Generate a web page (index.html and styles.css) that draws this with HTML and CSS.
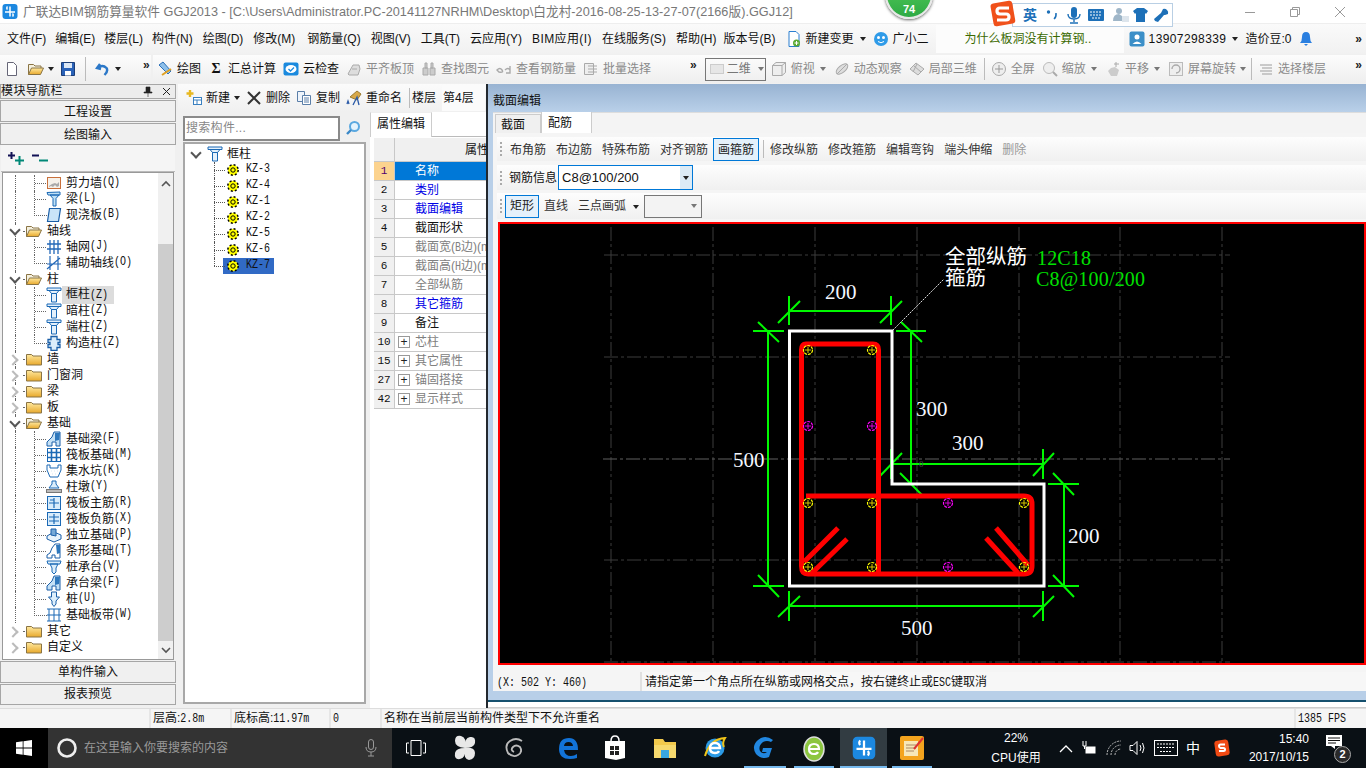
FILE: index.html
```html
<!DOCTYPE html>
<html lang="zh-CN">
<head>
<meta charset="utf-8">
<title>广联达BIM钢筋算量软件 GGJ2013</title>
<link rel="stylesheet" href="styles.css">
</head>
<body>
<svg class="defs" width="0" height="0">
<defs>
<linearGradient id="fy" x1="0" y1="0" x2="0" y2="1"><stop offset="0" stop-color="#ffe9a0"/><stop offset="1" stop-color="#e8a92c"/></linearGradient>
<symbol id="fold" viewBox="0 0 16 16"><path d="M.5 3.5h5l1.5 1.5h8.500v9H.5z" fill="url(#fy)" stroke="#8a7444"/></symbol>
<symbol id="foldo" viewBox="0 0 16 16"><path d="M.5 13.500v-10h5l1.500 1.500h6v2" fill="#f4f0df" stroke="#8a7444"/><path d="M.5 13.500l3-6.500h12l-3 6.500z" fill="url(#fy)" stroke="#8a7444"/></symbol>
<symbol id="col" viewBox="0 0 16 16"><path d="M1 1h14v2.500H1zM3 3.500h10l-2.500 3h-5zM5.500 6.500h5V15h-5z" fill="#e4f1fc" stroke="#1b69b5"/></symbol>
<symbol id="wall" viewBox="0 0 16 16"><rect x="1.500" y="2.500" width="13" height="11" fill="#f5f1ea" stroke="#c8703c"/><path d="M3 12l2-1 2 1 2-2 2 2 2-1V7l-2 2-2-1-3 1-3 2z" fill="#aaa"/></symbol>
<symbol id="beam" viewBox="0 0 16 16"><path d="M1 1.500l13-.5v3H2zM4 4h9l-3 3.500V15H7V7.500z" fill="#bfe0f6" stroke="#1b69b5"/></symbol>
<symbol id="slab" viewBox="0 0 16 16"><path d="M3.500 1.500h11l-2 13h-11z" fill="#c9e4f8" stroke="#1b5fa8" stroke-width="1.200"/></symbol>
<symbol id="grid" viewBox="0 0 16 16"><path d="M4 1v14M8 1v14M12 1v14M1 5h14M1 10h14" stroke="#2468b8" fill="none" stroke-width="1.300"/></symbol>
<symbol id="axis" viewBox="0 0 16 16"><path d="M4 1v14M12 1v14M1 9h14M1 14L14 3" stroke="#2468b8" fill="none" stroke-width="1.200"/></symbol>
<symbol id="gz" viewBox="0 0 16 16"><path d="M5 1.500h6v3h3v3h-2v2h2v3h-3v3H5v-3H2v-3h2v-2H2v-3h3z" fill="#dceefb" stroke="#1b5fa8" stroke-width="1.300"/></symbol>
<symbol id="fb" viewBox="0 0 16 16"><path d="M1 15v-4l5-5 2-5h6v14h-4v-4H6v4z" fill="#c5e1f6" stroke="#1b5fa8"/><path d="M9 2l5 0-1 7-4 1z" fill="#2f78bd"/></symbol>
<symbol id="raft" viewBox="0 0 16 16"><rect x="1.500" y="1.500" width="13" height="13" fill="#fff" stroke="#1b69b5"/><path d="M1.500 5.500h13M1.500 10.500h13M5.500 1.500v13M10.500 1.500v13" stroke="#1b69b5" stroke-width="1.600"/></symbol>
<symbol id="pit" viewBox="0 0 16 16"><path d="M1 2h3v3h8V2h3v5l-3 7H4L1 7z" fill="#fff" stroke="#1b69b5"/><path d="M5 8h.1M8 8h.1M11 8h.1M6.500 11h.1M9.500 11h.1" stroke="#2277c4" stroke-width="2"/></symbol>
<symbol id="pier" viewBox="0 0 16 16"><path d="M6 2h4v3l3 4H3l3-4z" fill="#dceefb" stroke="#1b69b5"/><rect x=".5" y="10.500" width="15" height="3" fill="#bbb" stroke="#777"/></symbol>
<symbol id="rb1" viewBox="0 0 16 16"><rect x="1.500" y="1.500" width="13" height="13" fill="#d8ecfb" stroke="#1b69b5"/><path d="M3 8h10M8 3v10M4 5h4" stroke="#1b69b5" stroke-width="1.200" fill="none"/></symbol>
<symbol id="rb2" viewBox="0 0 16 16"><rect x="1.500" y="1.500" width="13" height="13" fill="#d8ecfb" stroke="#1b69b5"/><path d="M3 6h10M3 10h10M8 3v10" stroke="#1b69b5" stroke-width="1.200" fill="none"/></symbol>
<symbol id="iso" viewBox="0 0 16 16"><path d="M1 9l7-4 7 3v4l-7 3-7-3z" fill="#e9f3fb" stroke="#1b5fa8"/><path d="M5 8V2h5v7z" fill="#77a9d6" stroke="#1b5fa8"/></symbol>
<symbol id="strip" viewBox="0 0 16 16"><path d="M1 15v-3l3-2 2-5 3-4h5v14H9v-3H6v3z" fill="#fff" stroke="#1b5fa8"/><path d="M10 2h4v8l-3 1z" fill="#2f78bd"/></symbol>
<symbol id="pcap" viewBox="0 0 16 16"><path d="M1 2h14l-1 3H2zM4 5h8l-2 4v4l-2 2-2-2V9z" fill="#dceefb" stroke="#1b69b5"/></symbol>
<symbol id="pile" viewBox="0 0 16 16"><path d="M5.500 1h5v5h3L10 10v3l-2 2.500L6 13v-3L2.500 6h3z" fill="#dceefb" stroke="#1b5fa8"/></symbol>
<symbol id="band" viewBox="0 0 16 16"><path d="M1 2h14M1 14h14M3 14V2M8 14V2M13 14V2M1 8h14" stroke="#1b69b5" fill="none"/></symbol>
<symbol id="gear" viewBox="0 0 12 12"><circle cx="6" cy="6" r="5.200" fill="#ff0" stroke="#000" stroke-width="1.500" stroke-dasharray="2 2.080"/><circle cx="6" cy="6" r="2.200" fill="#ff0" stroke="#000"/></symbol>
<symbol id="dis" viewBox="0 0 16 16"><path d="M2 13l5-9h6l1 4-2 6H3z" fill="#ddd" stroke="#aaa"/><path d="M6 8h5" stroke="#aaa"/></symbol>
<symbol id="app" viewBox="0 0 16 16"><rect x=".5" y=".5" width="15" height="15" rx="3" fill="#1c88e0"/><path d="M3 8.500h10M8 3v10M5.500 6a2 2 0 0 1 0-3M10.500 13a2 2 0 0 0 0-3" stroke="#fff" stroke-width="1.500" fill="none"/></symbol>
</defs>
</svg>

<div class="app">
  <header class="titlebar">
    <svg class="ic titleicon"><use href="#app"/></svg>
    <span class="titletext">广联达BIM钢筋算量软件 GGJ2013 - [C:\Users\Administrator.PC-20141127NRHM\Desktop\白龙村-2016-08-25-13-27-07(2166版).GGJ12]</span>
    <div class="winctl">
      <svg width="12" height="12" viewBox="0 0 12 12"><path d="M1 6.500h10" stroke="#999"/></svg>
      <svg width="12" height="12" viewBox="0 0 12 12"><path d="M1.500 3.500h7v7h-7zM3.500 3V1.500h7v7H9" fill="none" stroke="#999"/></svg>
      <svg width="12" height="12" viewBox="0 0 12 12"><path d="M1 1l10 10M11 1L1 11" stroke="#999"/></svg>
    </div>
  </header>

  <nav class="menubar">
    <span class="m m-n">文件(F)</span><span class="m m-n">编辑(E)</span><span class="m m-n">楼层(L)</span><span class="m">构件(N)</span><span class="m">绘图(D)</span><span class="m m-w">修改(M)</span><span class="m">钢筋量(Q)</span><span class="m">视图(V)</span><span class="m">工具(T)</span><span class="m">云应用(Y)</span><span class="m m-bim">BIM应用(I)</span><span class="m">在线服务(S)</span><span class="m m-help">帮助(H)</span><span class="m">版本号(B)</span>
    <span class="m mi"><svg class="ic"><path d="M3 .5h7l3 3v12H3z" fill="#fff" stroke="#2a7fd0"/><circle cx="10.500" cy="12" r="3.500" fill="#5aaa32"/><path d="M10.500 10v4M8.500 12h4" stroke="#fff"/></svg>新建变更<i class="caret"></i></span>
    <span class="m mi"><svg class="ic"><circle cx="8" cy="8" r="7" fill="#2f9be8"/><circle cx="5.500" cy="6.500" r="1.500" fill="#fff"/><circle cx="10.500" cy="6.500" r="1.500" fill="#fff"/><path d="M5 10.500q3 2.500 6 0" stroke="#fff" fill="none"/></svg>广小二</span>
    <span class="hint">为什么板洞没有计算钢..</span>
    <span class="m mi"><svg class="ic"><rect x=".5" y=".5" width="15" height="15" rx="2" fill="#3b8fc8"/><circle cx="8" cy="6" r="2.500" fill="#fff"/><path d="M3.500 13q4.500-5 9 0z" fill="#fff"/></svg><span class="phone">13907298339</span><i class="caret"></i></span>
    <span class="m">造价豆:0</span>
    <svg class="ic bell"><path d="M8 1q4 0 4 5 0 4 2 6H2q2-2 2-6 0-5 4-5zM6 13h4l-2 2z" fill="#2a7fe0"/></svg>
    <span class="more more-end">»</span>
  </nav>

  <div class="toolbar">
    <div class="tg tg1">
      <svg class="ic"><path d="M3.500 1.500h6l3 3v10h-9z" fill="#fff" stroke="#667"/></svg>
      <svg class="ic ic-open"><use href="#foldo"/></svg><i class="caret c1"></i>
      <svg class="ic"><path d="M1.500 1.500h13v13h-13z" fill="#2a62b8" stroke="#1c3e78"/><path d="M4 2h8v5H4z" fill="#dbe7f5"/><path d="M5 10h6v4.500H5z" fill="#fff"/></svg>
      <b class="sep"></b>
      <svg class="ic ic-undo"><path d="M5 3L2 7l4 1M2.500 7q5-4 9 0 2 3-2 7" fill="none" stroke="#2c78c8" stroke-width="2.400"/></svg><i class="caret c2"></i>
      <span class="more">»</span>
    </div>
    <div class="tg tg2">
      <span class="ti"><svg class="ic"><path d="M2 4l4-3 8 9-3 3z" fill="#8ec0ea" stroke="#2a6fb8"/><path d="M5 14l9-6" stroke="#e0a020" stroke-width="2"/></svg>绘图</span>
      <span class="ti"><span class="sigma">Σ</span>汇总计算</span>
      <span class="ti"><svg class="ic"><rect x=".5" y="1.500" width="15" height="13" rx="2" fill="#1b8ade"/><ellipse cx="8" cy="8" rx="5.500" ry="4" fill="#fff"/><path d="M5.500 8l2 2 3.500-3.500" stroke="#1b8ade" fill="none" stroke-width="1.300"/></svg>云检查</span>
      <span class="ti off"><svg class="ic"><use href="#dis"/></svg>平齐板顶</span>
      <span class="ti off"><svg class="ic"><path d="M2 7h5v7H2zM9 7h5v7H9zM4 2h2v5H4zM10 2h2v5h-2z" fill="#ccc" stroke="#aaa"/></svg>查找图元</span>
      <span class="ti off"><svg class="ic"><path d="M1 9q3-3 5 0t-3 2zM9 9q3-3 5 0M14 5v7H10" fill="none" stroke="#aaa" stroke-width="1.400"/></svg>查看钢筋量</span>
      <span class="ti off"><svg class="ic"><path d="M1.500 2.500h9v11h-9zM5 5h9M5 8h9M5 11h9" fill="#eee" stroke="#aaa"/></svg>批量选择</span>
      <span class="more">»</span>
      <span class="combo2"><i class="swatch"></i>二维<i class="caret g"></i></span>
      <span class="ti off wc"><svg class="ic"><path d="M1.500 4.500L5 1.500h9.500v10l-3.500 3H1.500zM1.500 4.500h9.500v10M11 4.500l3.500-3" fill="#eee" stroke="#aaa"/></svg>俯视<i class="caret g"></i></span>
      <span class="ti off"><svg class="ic"><ellipse cx="8" cy="8" rx="7" ry="3.500" transform="rotate(-40 8 8)" fill="#ddd" stroke="#aaa"/><path d="M3 13L13 3" stroke="#aaa"/></svg>动态观察</span>
      <span class="ti off"><svg class="ic"><path d="M1 8l6-6 8 6-6 6z" fill="#ddd" stroke="#aaa"/><path d="M5 5l7 6M8 3l-4 8" stroke="#aaa"/></svg>局部三维</span>
      <b class="sep s2"></b>
      <span class="ti off"><svg class="ic"><circle cx="8" cy="8" r="6.500" fill="#eee" stroke="#aaa"/><path d="M8 4v8M4 8h8" stroke="#999"/></svg>全屏</span>
      <span class="ti off wc"><svg class="ic"><circle cx="7" cy="7" r="5.500" fill="#eee" stroke="#bbb"/><path d="M11 11l4 4" stroke="#aaa" stroke-width="2"/></svg>缩放<i class="caret g"></i></span>
      <span class="ti off wc"><svg class="ic"><path d="M3 10l3-3 4-1 4 3-2 6H6z" fill="#ccc"/><path d="M11 1v5M9 3h5" stroke="#aaa"/></svg>平移<i class="caret g"></i></span>
      <span class="ti off wd"><svg class="ic"><rect x="1.500" y="1.500" width="13" height="13" fill="#eee" stroke="#bbb"/><path d="M4 8a4 4 0 1 1 4 4" fill="none" stroke="#aaa" stroke-width="1.400"/></svg>屏幕旋转<i class="caret g"></i></span>
      <b class="sep s2"></b>
      <span class="ti off"><svg class="ic"><path d="M2 4h12M4 7h10M2 10h12M4 13h10" stroke="#bbb" stroke-width="1.600"/></svg>选择楼层</span>
      <span class="more more-end">»</span>
    </div>
  </div>

  <main class="main">
    <aside class="nav">
      <div class="navhead"><span>模块导航栏</span><span class="navctl"><svg width="10" height="11" viewBox="0 0 10 11"><path d="M3 1h4v5h2v1H1V6h2zM5 7v4" fill="#222" stroke="#222" stroke-width=".6"/></svg><svg width="9" height="9" viewBox="0 0 9 9"><path d="M1 1l7 7M8 1L1 8" stroke="#222"/></svg></span></div>
      <div class="nbtn">工程设置</div>
      <div class="nbtn">绘图输入</div>
      <div class="pm"><svg width="17" height="14" viewBox="0 0 17 14"><path d="M0 4.500h7M3.500 1v7" stroke="#115" stroke-width="2"/><path d="M7 9.500h9M11.500 5v9" stroke="#087" stroke-width="2"/></svg><svg width="17" height="14" viewBox="0 0 17 14"><path d="M0 4.500h7" stroke="#115" stroke-width="2"/><path d="M7 9.500h9" stroke="#087" stroke-width="2"/></svg></div>
      <div class="navtree">
        <div class="treelist">
          <div class="r r2"><svg class="ti16"><use href="#wall"/></svg>剪力墙<span class="l">(Q)</span></div>
          <div class="r r2"><svg class="ti16"><use href="#beam"/></svg>梁<span class="l">(L)</span></div>
          <div class="r r2 last"><svg class="ti16"><use href="#slab"/></svg>现浇板<span class="l">(B)</span></div>
          <div class="r r1 open"><i class="chev"></i><svg class="ti16"><use href="#foldo"/></svg>轴线</div>
          <div class="r r2"><svg class="ti16"><use href="#grid"/></svg>轴网<span class="l">(J)</span></div>
          <div class="r r2 last"><svg class="ti16"><use href="#axis"/></svg>辅助轴线<span class="l">(O)</span></div>
          <div class="r r1 open"><i class="chev"></i><svg class="ti16"><use href="#foldo"/></svg>柱</div>
          <div class="r r2 sel"><svg class="ti16"><use href="#col"/></svg><span class="selt">框柱<span class="l">(Z)</span></span></div>
          <div class="r r2"><svg class="ti16"><use href="#col"/></svg>暗柱<span class="l">(Z)</span></div>
          <div class="r r2"><svg class="ti16"><use href="#col"/></svg>端柱<span class="l">(Z)</span></div>
          <div class="r r2 last"><svg class="ti16"><use href="#gz"/></svg>构造柱<span class="l">(Z)</span></div>
          <div class="r r1"><i class="chev cl"></i><svg class="ti16"><use href="#fold"/></svg>墙</div>
          <div class="r r1"><i class="chev cl"></i><svg class="ti16"><use href="#fold"/></svg>门窗洞</div>
          <div class="r r1"><i class="chev cl"></i><svg class="ti16"><use href="#fold"/></svg>梁</div>
          <div class="r r1"><i class="chev cl"></i><svg class="ti16"><use href="#fold"/></svg>板</div>
          <div class="r r1 open"><i class="chev"></i><svg class="ti16"><use href="#foldo"/></svg>基础</div>
          <div class="r r2"><svg class="ti16"><use href="#fb"/></svg>基础梁<span class="l">(F)</span></div>
          <div class="r r2"><svg class="ti16"><use href="#raft"/></svg>筏板基础<span class="l">(M)</span></div>
          <div class="r r2"><svg class="ti16"><use href="#pit"/></svg>集水坑<span class="l">(K)</span></div>
          <div class="r r2"><svg class="ti16"><use href="#pier"/></svg>柱墩<span class="l">(Y)</span></div>
          <div class="r r2"><svg class="ti16"><use href="#rb1"/></svg>筏板主筋<span class="l">(R)</span></div>
          <div class="r r2"><svg class="ti16"><use href="#rb2"/></svg>筏板负筋<span class="l">(X)</span></div>
          <div class="r r2"><svg class="ti16"><use href="#iso"/></svg>独立基础<span class="l">(P)</span></div>
          <div class="r r2"><svg class="ti16"><use href="#strip"/></svg>条形基础<span class="l">(T)</span></div>
          <div class="r r2"><svg class="ti16"><use href="#pcap"/></svg>桩承台<span class="l">(V)</span></div>
          <div class="r r2"><svg class="ti16"><use href="#fb"/></svg>承台梁<span class="l">(F)</span></div>
          <div class="r r2"><svg class="ti16"><use href="#pile"/></svg>桩<span class="l">(U)</span></div>
          <div class="r r2 last"><svg class="ti16"><use href="#band"/></svg>基础板带<span class="l">(W)</span></div>
          <div class="r r1 noln"><i class="chev cl"></i><svg class="ti16"><use href="#fold"/></svg>其它</div>
          <div class="r r1 noln"><i class="chev cl"></i><svg class="ti16"><use href="#fold"/></svg>自定义</div>
        </div>
        <div class="vscroll">
          <div class="sbtn"><svg width="10" height="7" viewBox="0 0 10 7"><path d="M1 6l4-4 4 4" fill="none" stroke="#555" stroke-width="1.600"/></svg></div>
          <div class="thumb"></div>
          <div class="sbtn sb2"><svg width="10" height="7" viewBox="0 0 10 7"><path d="M1 1l4 4 4-4" fill="none" stroke="#555" stroke-width="1.600"/></svg></div>
        </div>
      </div>
      <div class="nbtn nb3">单构件输入</div>
      <div class="nbtn nb4">报表预览</div>
    </aside>

    <section class="mid">
      <div class="midbar">
        <span class="bi"><svg class="ic"><path d="M4 0v7M.5 3.500h7" stroke="#e8b820" stroke-width="2.400"/><rect x="7.500" y="7.500" width="8" height="7" fill="#fff" stroke="#3a80c0"/><path d="M7.500 10h8M11 10v4" stroke="#3a80c0"/></svg>新建<i class="caret"></i></span>
        <span class="bi"><svg class="ic"><path d="M2 2l12 12M14 2L2 14" stroke="#333" stroke-width="2"/></svg>删除</span>
        <span class="bi"><svg class="ic"><path d="M1.500 1.500h7v10h-7z" fill="#eef4fb" stroke="#5a7ea8"/><path d="M6.500 5.500h8v9h-8zM8 8h5M8 10h5M8 12h5" fill="#fff" stroke="#5a7ea8"/></svg>复制</span>
        <span class="bi"><svg class="ic"><path d="M4 7l7-6 4 3-4 6z" fill="#d8a848" stroke="#9a7a30"/><path d="M1 14l1-3 1 3M7 15l4-8 2 8" fill="none" stroke="#2a5aa8" stroke-width="1.300"/></svg>重命名</span>
        <b class="sep s3"></b>
        <span class="fl1">楼层</span>
        <span class="fl2">第4层</span>
      </div>
      <div class="midbody">
        <div class="compcol">
          <div class="searchrow">
            <div class="search">搜索构件...</div>
            <div class="sicon"><svg width="16" height="16" viewBox="0 0 16 16"><circle cx="9.500" cy="6.500" r="4.500" fill="#e4f3fd" stroke="#5aa8e0" stroke-width="2"/><path d="M6 10l-4 4" stroke="#3a88c8" stroke-width="2.400"/></svg></div>
          </div>
          <div class="comptree">
            <div class="root"><i class="chev"></i><svg class="ti16"><use href="#col"/></svg>框柱</div>
            <div class="kz"><svg class="ge"><use href="#gear"/></svg><span class="l">KZ-3</span></div>
            <div class="kz"><svg class="ge"><use href="#gear"/></svg><span class="l">KZ-4</span></div>
            <div class="kz"><svg class="ge"><use href="#gear"/></svg><span class="l">KZ-1</span></div>
            <div class="kz"><svg class="ge"><use href="#gear"/></svg><span class="l">KZ-2</span></div>
            <div class="kz"><svg class="ge"><use href="#gear"/></svg><span class="l">KZ-5</span></div>
            <div class="kz"><svg class="ge"><use href="#gear"/></svg><span class="l">KZ-6</span></div>
            <div class="kz last"><div class="kzsel"><svg class="ge"><use href="#gear"/></svg><span class="l">KZ-7</span></div></div>
          </div>
        </div>
        <div class="propcol">
          <div class="ptabs"><span class="ptab">属性编辑</span></div>
          <div class="ptable">
            <div class="prow phead"><span class="pn"></span><span class="pv pvh">属性名称</span></div>
            <div class="prow psel"><span class="pn">1</span><span class="pv">名称</span></div>
            <div class="prow"><span class="pn">2</span><span class="pv blue">类别</span></div>
            <div class="prow"><span class="pn">3</span><span class="pv blue">截面编辑</span></div>
            <div class="prow"><span class="pn">4</span><span class="pv">截面形状</span></div>
            <div class="prow"><span class="pn">5</span><span class="pv gr">截面宽(<span class="l">B</span>边)(mm)</span></div>
            <div class="prow"><span class="pn">6</span><span class="pv gr">截面高(<span class="l">H</span>边)(mm)</span></div>
            <div class="prow"><span class="pn">7</span><span class="pv gr">全部纵筋</span></div>
            <div class="prow"><span class="pn">8</span><span class="pv blue">其它箍筋</span></div>
            <div class="prow"><span class="pn">9</span><span class="pv">备注</span></div>
            <div class="prow"><span class="pn">10</span><span class="pv gr px"><i class="plus">+</i>芯柱</span></div>
            <div class="prow"><span class="pn">15</span><span class="pv gr px"><i class="plus">+</i>其它属性</span></div>
            <div class="prow"><span class="pn">27</span><span class="pv gr px"><i class="plus">+</i>锚固搭接</span></div>
            <div class="prow"><span class="pn">42</span><span class="pv gr px"><i class="plus">+</i>显示样式</span></div>
          </div>
        </div>
      </div>
    </section>

    <section class="dialog">
      <div class="dtitle">截面编辑</div>
      <div class="dbody">
        <div class="dtabs"><span class="dtab">截面</span><span class="dtab act">配筋</span></div>
        <div class="dpanel">
          <div class="drow r-a"><i class="grip"></i><span class="b">布角筋</span><span class="b">布边筋</span><span class="b">特殊布筋</span><span class="b">对齐钢筋</span><span class="b on">画箍筋</span><b class="sep s4"></b><span class="b">修改纵筋</span><span class="b">修改箍筋</span><span class="b">编辑弯钩</span><span class="b">端头伸缩</span><span class="b off">删除</span></div>
          <div class="drow r-b"><i class="grip"></i><span class="lab">钢筋信息</span><span class="rebar">C8@100/200<i class="rarrow"><i class="caret"></i></i></span></div>
          <div class="drow r-c"><i class="grip"></i><span class="b on">矩形</span><span class="b">直线</span><span class="b">三点画弧<i class="caret"></i></span><span class="smallcombo"><i class="caret g"></i></span></div>
          <div class="canvas">
            <svg class="cad" width="864" height="439" viewBox="500 224 864 439">
              <g class="gridl">
                <path d="M611 227V663M713 227V663M815 227V663M917 227V663M1019 227V663M1120 227V663M1222 227V663"/>
                <path d="M604 255H1230M604 357H1230M604 560H1230M604 662H1230"/>
                <path class="gridm" d="M603 459H1230"/>
              </g>
              <g class="dimg">
                <path d="M789 311H891M789 296V325M891 296V325M778 323L800 301M880 323L902 301"/>
                <path d="M768 331V586M753 331H784M753 586H784M758 322L779 342M758 575L779 597"/>
                <path d="M789 606H1043M789 591V621M1043 591V621M778 617L800 596M1033 617L1054 596"/>
                <path d="M1064 484V586M1048 484H1079M1048 586H1079M1053 473L1074 495M1053 575L1074 597"/>
                <path d="M911 331V484M896 331H926M896 484H926M901 322L922 342M900 473L922 495"/>
                <path d="M891 464H1043M891 449V479M1043 449V479M880 476L902 453M1033 476L1054 453"/>
              </g>
              <path class="outline" d="M789.500 331H892V484H1044V586H789.500Z"/>
              <path class="leader" d="M893 330L944 279"/>
              <g class="rebar-r">
                <path d="M806 496H1024Q1032 496 1032 504V566Q1032 574 1024 574H808Q801.500 574 801.500 566V350Q801.500 344 806 344H873Q878.500 344 878.500 350V572"/>
                <path d="M804 562L838 528M812 573L847 539M1028 565L996 528M1018 573L986 538"/>
              </g>
              <g class="yc">
                <circle cx="808" cy="350" r="4.500"/><circle cx="872" cy="350" r="4.500"/><circle cx="808" cy="503" r="4.500"/><circle cx="872" cy="503" r="4.500"/><circle cx="1024" cy="503" r="4.500"/><circle cx="808" cy="567" r="4.500"/><circle cx="872" cy="567" r="4.500"/><circle cx="1024" cy="567" r="4.500"/>
              </g>
              <g class="mc">
                <circle cx="808" cy="426" r="4.500"/><circle cx="872" cy="426" r="4.500"/><circle cx="948" cy="503" r="4.500"/><circle cx="948" cy="567" r="4.500"/>
              </g>
              <g class="inner">
                <path d="M805 350h6M808 347v6M869 350h6M872 347v6M805 503h6M808 500v6M869 503h6M872 500v6M1021 503h6M1024 500v6M805 567h6M808 564v6M869 567h6M872 564v6M1021 567h6M1024 564v6"/>
              </g>
              <g class="innerm">
                <path d="M805 426h6M808 423v6M869 426h6M872 423v6M945 503h6M948 500v6M945 567h6M948 564v6"/>
              </g>
              <text class="dim" x="825" y="299">200</text>
              <text class="dim" x="916" y="416">300</text>
              <text class="dim" x="952" y="450">300</text>
              <text class="dim" x="733" y="467">500</text>
              <text class="dim" x="901" y="635">500</text>
              <text class="dim" x="1068" y="543">200</text>
              <text class="cjk" x="945" y="264">全部纵筋</text>
              <text class="cjk" x="945" y="285">箍筋</text>
              <text class="grn" x="1037" y="265" textLength="54" lengthAdjust="spacing">12C18</text>
              <text class="grn" x="1036" y="286" textLength="109" lengthAdjust="spacing">C8@100/200</text>
              <text class="tiny" x="919" y="467">0</text>
            </svg>
          </div>
          <div class="dstatus"><span class="coord"><span class="l">(X: 502 Y: 460)</span></span><span class="msg">请指定第一个角点所在纵筋或网格交点，按右键终止或<span class="l">ESC</span>键取消</span></div>
        </div>
      </div>
      <div class="dfoot"></div>
    </section>
  </main>

  <footer class="statusbar">
    <span class="sc s-a"></span>
    <span class="sc s-b">层高:<span class="l">2.8m</span></span>
    <span class="sc s-c">底标高:<span class="l">11.97m</span></span>
    <span class="sc s-d"><span class="l">0</span></span>
    <span class="sc s-e">名称在当前层当前构件类型下不允许重名</span>
    <span class="sc s-f"><span class="l">1385 FPS</span></span>
  </footer>

  <div class="taskbar">
    <div class="start"><svg width="16" height="16" viewBox="0 0 16 16"><path d="M0 2.300l6.700-1v6.300H0zM7.500 1.200L16 0v7.600H7.500zM0 8.400h6.700v6.300L0 13.700zM7.500 8.400H16V16l-8.500-1.200z" fill="#fff"/></svg></div>
    <div class="tsearch"><svg width="22" height="22" viewBox="0 0 22 22"><circle cx="11" cy="11" r="8.500" fill="none" stroke="#eee" stroke-width="2.600"/></svg><span>在这里输入你要搜索的内容</span><svg class="micro" width="12" height="18" viewBox="0 0 12 18"><rect x="3.500" y=".5" width="5" height="10" rx="2.500" fill="none" stroke="#999"/><path d="M1 8q0 5 5 5t5-5M6 13v4M3 17h6" fill="none" stroke="#999"/></svg></div>
    <div class="tasks">
      <span class="t t-a"><svg width="20" height="16" viewBox="0 0 20 16"><path d="M5 .5h10v15H5zM3 3H.5v10H3M17 3h2.500v10H17" fill="none" stroke="#fff"/></svg></span>
      <span class="t"><svg width="24" height="26" viewBox="0 0 24 26"><path d="M12 13Q2 12 2 6T8 1q6 1 4 12zM12 13q10-1 10 5t-6 7q-6-1-4-12zM12 13q-1-10 5-11t5 6q-1 5-10 5zM12 13q1 10-5 11t-5-6q1-5 10-5z" fill="#e8e8e8"/></svg></span>
      <span class="t"><svg width="22" height="22" viewBox="0 0 22 22"><path d="M18 4Q12 0 6 4T4 16q5 5 10 2t2-8q-4-3-7 0t1 5" fill="none" stroke="#bbb" stroke-width="1.800"/></svg></span>
      <span class="t t-e"><svg width="24" height="24" viewBox="0 0 24 24"><path d="M3 13Q3 2 13 2q9 0 9 12H8q1 6 7 6 3 0 6-2v4q-3 1-7 1Q3 23 3 13zM8 10h9q-.5-4-4.500-4T8 10z" fill="#1273d8"/></svg></span>
      <span class="t"><svg width="22" height="26" viewBox="0 0 22 26"><path d="M7 6q0-5 4-5t4 5" fill="none" stroke="#fff" stroke-width="1.500"/><path d="M1 6h20v17l-9 2-11-2z" fill="#fff"/><path d="M6 11h4v4H6zM11 11h4v4h-4zM6 16h4v4H6zM11 16h4v4h-4z" fill="#222"/></svg></span>
      <span class="t"><svg width="24" height="22" viewBox="0 0 24 22"><path d="M1 2h9l2 3h11v16H1z" fill="#f2c94c"/><path d="M1 8h22v13H1z" fill="#f6d96e"/><path d="M8 13h8v8H8z" fill="#39a7e0"/></svg></span>
      <span class="t"><svg width="26" height="26" viewBox="0 0 26 26"><circle cx="13" cy="13" r="9.500" fill="#2b9ae6"/><path d="M3 21Q8 4 23 3 20 8 22 12" fill="none" stroke="#f0c419" stroke-width="2"/><path d="M8 13h10q0-5-5-5t-5 5q0 5 5 5 3 0 4-2" fill="none" stroke="#fff" stroke-width="2.400"/></svg></span>
      <span class="t u"><svg width="28" height="26" viewBox="0 0 28 26"><path d="M22 5Q14-1 7 5T5 19q6 6 13 3l3-9h-9l-1 4h5q-4 3-7-1-2-5 3-9 4-2 8 0z" fill="#2187e0"/></svg></span>
      <span class="t u t-g"><svg width="24" height="28" viewBox="0 0 24 28"><ellipse cx="12" cy="15" rx="10" ry="12" fill="#8cc63f" stroke="#ddd" stroke-width="1.500"/><path d="M7 15h10q0-5-5-5t-5 5q0 5 5 5 3 0 4-2" fill="none" stroke="#fff" stroke-width="2.200"/></svg></span>
      <span class="t u act"><svg width="24" height="24" viewBox="0 0 16 16"><use href="#app"/></svg></span>
      <span class="t u t-n"><svg width="26" height="26" viewBox="0 0 26 26"><rect x="1" y="1" width="24" height="24" rx="2" fill="#f4a41e"/><rect x="5" y="6" width="14" height="15" fill="#f7e7b8"/><path d="M7 10h10M7 13h10M7 16h8" stroke="#a86"/><path d="M15 14L24 3" stroke="#d33" stroke-width="2"/></svg></span>
    </div>
    <div class="tray">
      <div class="cpu"><span>22%</span><span>CPU使用</span></div>
      <svg class="tr tr1" width="14" height="9" viewBox="0 0 14 9"><path d="M1 8l6-6 6 6" fill="none" stroke="#fff" stroke-width="1.300"/></svg>
      <svg class="tr tr2" width="16" height="16" viewBox="0 0 16 16"><rect x="4.500" y="6.500" width="10" height="7" fill="#fff"/><path d="M2 1v5h3V1M3.500 6v3" stroke="#fff" fill="none"/></svg>
      <svg class="tr tr3" width="18" height="16" viewBox="0 0 18 16"><path d="M1 15A14 14 0 0 1 15 1M5 15A10 10 0 0 1 15 5M9 15a6 6 0 0 1 6-6" fill="none" stroke="#bbb" stroke-dasharray="2 1"/></svg>
      <svg class="tr tr4" width="18" height="16" viewBox="0 0 18 16"><path d="M1 5.500h3l4-4v13l-4-4H1zM11 5q2 3 0 6M13.500 3q3 5 0 10" fill="none" stroke="#fff"/></svg>
      <svg class="tr tr5" width="24" height="16" viewBox="0 0 24 16"><rect x=".5" y=".5" width="23" height="15" fill="none" stroke="#fff"/><path d="M3 4h18M3 7.500h18M6 11.500h12" stroke="#fff" stroke-dasharray="2 1"/></svg>
      <span class="zh">中</span>
      <svg class="tr tr6" width="16" height="18" viewBox="0 0 16 18"><rect x="1" y="1" width="14" height="16" rx="3" fill="#f04a14" transform="rotate(-8 8 9)"/><path d="M11 5.500H6.500q-1.500 0-1.500 1.500T6.500 9h3q1.500 0 1.500 1.500T9.500 12H5" fill="none" stroke="#fff" stroke-width="2"/></svg>
      <div class="clock"><span>15:40</span><span>2017/10/15</span></div>
      <span class="notif"><svg width="16" height="14" viewBox="0 0 16 14"><path d="M0 0h16v11H9v3l-4-3H0z" fill="#fff"/><path d="M2 3h12M2 5.500h12M2 8h8" stroke="#111"/></svg><b class="nbadge">2</b></span>
    </div>
  </div>

  <div class="badge74"><span>74</span></div>
  <div class="ime">
    <svg class="imes" width="27" height="28" viewBox="0 0 27 28"><rect x="2" y="2" width="22" height="23" rx="3" fill="#f0501a" transform="rotate(-10 13 14)"/><path d="M19 8H10q-3 0-3 3t3 3h6q3 0 3 3t-3 3H7" fill="none" stroke="#fff" stroke-width="3.200"/></svg>
    <span class="imet">英</span>
    <svg width="12" height="12" viewBox="0 0 12 12"><circle cx="2.500" cy="3" r="1.700" fill="#1d70b8"/><path d="M10 4q.5 4-2 6" stroke="#1d70b8" stroke-width="1.500" fill="none"/></svg>
    <svg width="14" height="17" viewBox="0 0 14 17"><rect x="4" y="0" width="6" height="11" rx="3" fill="#1d70b8"/><path d="M1 7q0 5 6 5t6-5M7 12v3M3 16h8" stroke="#1d70b8" fill="none" stroke-width="1.400"/></svg>
    <svg class="im-k" width="16" height="12" viewBox="0 0 16 12"><rect width="16" height="12" rx="1" fill="#1d70b8"/><path d="M2 3h12M2 6h12M4 9h8" stroke="#fff" stroke-dasharray="2 1"/></svg>
    <svg width="16" height="16" viewBox="0 0 16 16"><circle cx="6" cy="4" r="3" fill="#9fb6c8"/><path d="M0 14q0-7 6-7l3 2v5z" fill="#9fb6c8"/><rect x="9" y="9" width="7" height="6" fill="#dde5ec"/></svg>
    <svg class="im-s" width="15" height="14" viewBox="0 0 15 14"><path d="M4 0h7l4 3-2 3-1-1v9H3V5L2 6 0 3z" fill="#1d70b8"/></svg>
    <svg class="im-w" width="15" height="15" viewBox="0 0 15 15"><path d="M9 1a4 4 0 0 1 5 5l-3 1-1 0-6 7-3-1-1-2 7-6zM10 1l3 3" fill="#1d70b8"/></svg>
  </div>
</div>
</body>
</html>
```
FILE: styles.css
```css
* { box-sizing: border-box; }
html, body { margin: 0; padding: 0; }
body { width: 1366px; height: 768px; overflow: hidden; background: #f0f0f0; font: 12px/16px "Liberation Sans", "Noto Sans CJK SC", sans-serif; color: #111; }
.defs { position: absolute; }
i { font-style: normal; }
.app { position: relative; width: 1366px; height: 768px; display: flex; flex-direction: column; overflow: hidden; }
.ic { width: 16px; height: 16px; flex: none; }
.l { display: inline-block; font-family: "Liberation Mono", monospace; font-size: 10px; transform: scaleY(1.2); white-space: pre; }

.titlebar { height: 23px; background: #fff; display: flex; align-items: center; flex: none; }
.titleicon { width: 16px; height: 17px; margin-left: 2px; }
.titletext { margin-left: 5px; color: #777; font-size: 12.700px; white-space: nowrap; letter-spacing: .02px; }
.winctl { margin-left: auto; display: flex; gap: 33px; margin-right: 20px; }

.menubar { height: 31px; flex: none; background: linear-gradient(#fafafa, #f1f1f1); display: flex; align-items: center; padding-left: 7px; position: relative; border-top: 1px solid #eee; }
.m { margin-right: 10px; white-space: nowrap; display: flex; align-items: center; }
.m-n { margin-right: 9px; }
.m-w { margin-right: 12px; }
.m-bim { letter-spacing: .4px; }
.m-help { margin-right: 7px; }
.mi { gap: 4px; margin-right: 7px; }
.mi .caret { margin-left: 2px; }
.phone { letter-spacing: .4px; }
.hint { width: 188px; height: 28px; line-height: 28px; margin-right: 5px; padding-left: 29px; background: #fcfcfc; color: #3a6a00; flex: none; }
.caret { display: inline-block; width: 0; height: 0; border: 3px solid transparent; border-top: 4px solid #222; border-bottom: 0; margin-left: 5px; flex: none; }
.caret.g { border-top-color: #777; }
.bell { margin-left: -3px; }
.more { font-weight: bold; font-size: 12px; flex: none; color: #222; }
.more-end { margin-left: auto; margin-right: 4px; }
.sigma { width: 16px; text-align: center; font-weight: bold; font-size: 14px; font-family: "Liberation Serif", serif; }

.toolbar { height: 30px; flex: none; display: flex; background: #f0f0f0; padding-top: 1px; }
.tg { height: 28px; display: flex; align-items: center; background: linear-gradient(#fcfcfc, #eeeeee); }
.tg1 { width: 151px; padding-left: 4px; gap: 6px; }
.ic-open { margin-left: 2px; }
.c1, .c2 { margin-left: -2px; }
.tg1 .more { margin-left: 16px; margin-top: -8px; }
.tg2 { flex: 1; margin-left: 2px; padding-left: 4px; }
.tg2 > .more { margin: -8px 8px 0 32px; }
.tg2 > .more-end { margin: -8px 4px 0 auto; }
.sep { display: block; width: 1px; height: 24px; background: #bbb; flex: none; margin: 0 3px; }
.s2 { margin: 0 6px 0 0; height: 22px; }
.ti { display: flex; align-items: center; gap: 4px; margin-right: 7px; white-space: nowrap; flex: none; }
.off { color: #8a8a8a; }
.wc .caret { margin-left: 1px; margin-right: 1px; }
.wd { margin-right: 5px; }
.wd .caret { margin-left: 0; }
.combo2 { width: 61px; height: 23px; border: 1px solid #777; display: flex; align-items: center; padding-left: 4px; color: #777; margin-right: 5px; }
.swatch { width: 14px; height: 10px; background: #e6e6e6; border: 1px solid #ccc; margin-right: 3px; }
.combo2 .caret { margin-left: 7px; }

.main { height: 624px; flex: none; display: flex; }
.nav { width: 176px; flex: none; display: flex; flex-direction: column; }
.navhead { height: 15px; border: 1px solid #a6a6a6; background: #ececec; display: flex; justify-content: space-between; align-items: center; padding-left: 0; line-height: 13px; letter-spacing: .4px; }
.navctl { display: flex; gap: 9px; align-items: center; padding-right: 4px; }
.nbtn { height: 22px; margin-top: 1px; border: 1px solid #a6a6a6; background: #f0f0f0; text-align: center; line-height: 22px; flex: none; }
.nb3 { line-height: 20px; }
.nb4 { height: 21px; line-height: 19px; }
.pm { height: 27px; display: flex; align-items: center; gap: 7px; padding-left: 7px; background: #f5f5f5; margin: 0 1px; border-bottom: 1px solid #bbb; flex: none; }
.navtree { height: 488px; margin: 0 2px 0 2px; border: 1px solid #999; border-top-width: 1px; background: #fff; display: flex; flex: none; overflow: hidden; }
.treelist { width: 155px; padding-top: 2px; flex: none; }
.r { position: relative; height: 16px; display: flex; align-items: center; white-space: nowrap; }
.r::before { content: ""; position: absolute; left: 12px; top: 0; bottom: 0; border-left: 1px dotted #666; }
.r.noln::before { display: none; }
.r2 { padding-left: 43px; }
.r2 .ti16 { margin-right: 4px; }
.r2::after { content: ""; position: absolute; left: 31px; top: 0; width: 12px; height: 8px; border-left: 1px dotted #666; border-bottom: 1px dotted #666; }
.r2:not(.last)::after { height: 16px; border-bottom: 0; background: linear-gradient(90deg, #666 50%, transparent 50%) 0 8px / 2px 1px repeat-x; }
.r1 { padding-left: 7px; }
.r1 .ti16 { margin: 0 5px 0 6px; }
.r1::after { content: ""; position: absolute; left: 20px; top: 8px; width: 4px; border-top: 1px dotted #666; }
.chev { width: 10px; height: 10px; position: relative; flex: none; background: #fff; z-index: 1; }
.chev::after { content: ""; position: absolute; left: 1px; top: 0; width: 6px; height: 6px; border-right: 2px solid #555; border-bottom: 2px solid #555; transform: rotate(45deg); }
.chev.cl::after { left: -1px; top: 2px; border-color: #bbb; transform: rotate(-45deg); }
.ti16 { width: 16px; height: 16px; flex: none; position: relative; z-index: 1; }
.sel .ti16 { margin-right: 0; }
.selt { background: #dcdcdc; padding-left: 4px; line-height: 16px; width: 52px; margin-left: 0; position: relative; z-index: 1; }
.sel { padding-left: 43px; }
.vscroll { width: 16px; margin-left: auto; display: flex; flex-direction: column; background: #f0f0f0; flex: none; }
.sbtn { height: 20px; display: flex; justify-content: center; align-items: center; flex: none; }
.sb2 { height: 18px; margin-top: auto; }
.thumb { margin-top: 51px; height: 397px; background: #cdcdcd; flex: none; }

.mid { width: 308px; flex: none; margin-left: 2px; display: flex; flex-direction: column; }
.midbar { height: 28px; flex: none; display: flex; align-items: center; background: linear-gradient(#fbfbfb, #f0f0f0); padding-left: 8px; white-space: nowrap; }
.bi { display: flex; align-items: center; gap: 4px; margin-right: 6px; white-space: nowrap; flex: none; }
.bi .caret { margin-left: 0; }
.s3 { margin: 0 2px 0 1px; height: 20px; }
.fl1 { margin-right: 6px; flex: none; }
.fl2 { width: 43px; height: 26px; line-height: 26px; background: #fbfbfb; padding-left: 1px; flex: none; }
.midbody { flex: 1; display: flex; }
.compcol { width: 183px; margin-left: 5px; flex: none; display: flex; flex-direction: column; padding-top: 4px; }
.searchrow { height: 26px; display: flex; flex: none; }
.search { width: 157px; height: 25px; border: 2px solid #8a8a8a; background: #fff; color: #888; line-height: 21px; padding-left: 1px; letter-spacing: .3px; }
.sicon { width: 26px; height: 24px; background: #f0f0f0; display: flex; justify-content: center; align-items: center; }
.comptree { height: 562px; border: 2px solid #a8a8a8; background: #fff; flex: none; padding-top: 2px; }
.root { height: 16px; display: flex; align-items: center; padding-left: 6px; position: relative; }
.root .ti16 { margin: 0 4px 0 6px; }
.kz { height: 16px; display: flex; align-items: center; padding-left: 42px; position: relative; }
.kz::before { content: ""; position: absolute; left: 29px; top: 0; height: 16px; width: 11px; border-left: 1px dotted #555; }
.kz::after { content: ""; position: absolute; left: 29px; top: 8px; width: 11px; border-top: 1px dotted #555; }
.kz.last::before { height: 8px; }
.ge { width: 12px; height: 12px; margin-right: 7px; flex: none; }
.kzsel { display: flex; align-items: center; height: 16px; width: 51px; margin-left: -4px; padding-left: 4px; background: #316ac5; }
.ptabs { height: 25px; flex: none; border-bottom: 1px solid #bbb; }
.ptab { display: block; width: 62px; height: 25px; line-height: 22px; background: #fff; border: 1px solid #ccc; border-top-color: #eee; border-bottom: 0; text-align: center; }
.propcol { flex: 1; margin-left: 4px; display: flex; flex-direction: column; background: #fff; min-width: 0; overflow: hidden; }
.ptable { margin: 1px 0 0 4px; }
.prow { height: 19px; display: flex; border-bottom: 1px solid #c8c8c8; white-space: nowrap; line-height: 18px; overflow: hidden; }
.phead { height: 24px; line-height: 24px; }
.pn { width: 21px; background: #f0f0f0; text-align: center; border-right: 1px solid #c8c8c8; flex: none; font-family: "Liberation Mono", monospace; font-size: 11px; }
.pv { padding-left: 20px; flex: 1; }
.pvh { background: #f0f0f0; padding-left: 70px; }
.psel .pn { background: #fcd38e; color: #50006e; }
.psel .pv { background: #0078d7; color: #fff; }
.blue { color: #0000e6; }
.gr { color: #808080; }
.px { padding-left: 3px; display: flex; align-items: center; }
.plus { width: 12px; height: 12px; border: 1px solid #999; color: #222; display: inline-flex; justify-content: center; align-items: center; margin-right: 5px; font-size: 12px; line-height: 10px; flex: none; }

.dialog { width: 880px; flex: none; border-left: 2px solid #22282e; display: flex; flex-direction: column; background: #b8cfe8; }
.dtitle { height: 28px; flex: none; line-height: 34px; padding-left: 5px; background: linear-gradient(#98b3d2, #b9d0e9); }
.dbody { flex: 1; margin-left: 5px; display: flex; flex-direction: column; }
.dtabs { height: 21px; flex: none; display: flex; align-items: flex-end; background: #f4f4f4; padding-left: 2px; border-top: 1px solid #ddd; }
.dtab { width: 46px; height: 19px; background: #f0f0f0; border: 1px solid #ccc; border-bottom: 0; line-height: 20px; padding-left: 5px; font-size: 12px; }
.dtab.act { width: 51px; height: 21px; background: #fff; border-top: 0; line-height: 23px; padding-left: 6px; }
.dpanel { height: 558px; flex: none; background: #f5f5f5; display: flex; flex-direction: column; padding-top: 4px; }
.drow { display: flex; align-items: center; margin-left: 4px; flex: none; background: linear-gradient(#fdfdfd, #f0f0f0); white-space: nowrap; }
.r-a { height: 24px; }
.r-a .b { padding-top: 2px; }
.r-b { height: 25px; margin-top: 4px; }
.r-c { height: 26px; margin-top: 3px; }
.r-c .b { padding-top: 1px; }
.grip { width: 2px; height: 14px; margin: 0 3px; background: repeating-linear-gradient(#aaa 0 2px, transparent 2px 4px); flex: none; }
.b { padding: 0 4px; height: 23px; line-height: 21px; border: 1px solid transparent; display: inline-flex; align-items: center; flex: none; color: #333; }
.b.on { border-color: #0078d7; background: #e5f1fb; color: #222; }
.b.off { color: #999; }
.b .caret { margin-left: 7px; }
.s4 { margin: 0 1px 0 4px; height: 18px; }
.lab { margin-right: 1px; margin-left: 4px; }
.rebar { width: 135px; height: 25px; border: 1px solid #0078d7; background: #fff; padding-left: 3px; display: flex; align-items: center; font-size: 13px; }
.rarrow { margin-left: auto; width: 12px; height: 23px; background: #dcebf6; display: flex; justify-content: center; align-items: center; }
.rarrow .caret { margin: 0; }
.smallcombo { width: 58px; height: 23px; border: 1px solid #777; background: #f3f3f3; display: flex; justify-content: flex-end; align-items: center; padding-right: 4px; }
.canvas { margin: 3px 0 0 5px; height: 443px; width: 868px; border: 2px solid #ff0000; background: #000; flex: none; }
.cad { display: block; }
.gridl path { stroke: #3c3c3c; fill: none; stroke-dasharray: 14 3 3 3; }
.gridl .gridm { stroke: #606060; }
.dimg path { stroke: #00f800; stroke-width: 2; fill: none; }
.outline { fill: none; stroke: #fff; stroke-width: 3; }
.leader { stroke: #ddd; stroke-width: 1; fill: none; stroke-dasharray: 2 1; }
.rebar-r path { stroke: #ff0000; stroke-width: 5; fill: none; }
.yc circle { fill: none; stroke: #ffff00; stroke-width: 1.200; stroke-dasharray: 3 1; }
.mc circle { fill: none; stroke: #ff00ff; stroke-width: 1.200; stroke-dasharray: 3 1; }
.inner path { stroke: #d8c800; stroke-width: 1; }
.innerm path { stroke: #d800d8; stroke-width: 1; }
.dim { font: 21px "Liberation Serif", serif; fill: #f4f8ff; }
.cjk { font: 20.500px "Noto Sans CJK SC", sans-serif; fill: #fff; }
.grn { font: 20px "Liberation Serif", serif; fill: #00e000; }
.tiny { font: 9px "Liberation Serif", serif; fill: #555; }
.dstatus { height: 19px; margin-top: 7px; display: flex; flex: none; gap: 2px; background: #e0e0e0; }
.coord { width: 147px; background: #f5f5f5; padding-left: 4px; line-height: 20px; }
.msg { flex: 1; background: #f7f7f7; padding-left: 3px; line-height: 20px; white-space: nowrap; }
.dfoot { height: 8px; flex: none; background: #fff; border-top: 2px solid #15506e; border-bottom: 1px solid #ccc; }

.statusbar { height: 20px; flex: none; display: flex; gap: 2px; background: #e6e6e6; border-top: 1px solid #ddd; }
.sc { background: #f5f5f5; padding-left: 2px; line-height: 19px; white-space: nowrap; }
.s-a { width: 149px; }
.s-b { width: 79px; }
.s-c { width: 97px; }
.s-d { width: 49px; }
.s-e { width: 912px; }
.s-f { flex: 1; }

.taskbar { height: 40px; flex: none; display: flex; align-items: center; background: #0a1015; color: #fff; }
.start { width: 48px; height: 40px; background: #000; display: flex; justify-content: center; align-items: center; flex: none; }
.tsearch { width: 344px; height: 40px; background: #333; display: flex; align-items: center; padding-left: 8px; color: #9a9a9a; gap: 6px; font-size: 12px; flex: none; }
.micro { margin-left: auto; margin-right: 15px; }
.tasks { display: flex; align-items: center; height: 40px; flex: none; }
.t { width: 50px; height: 40px; display: flex; justify-content: center; align-items: center; flex: none; position: relative; }
.t-a { width: 48px; }
.t-e svg { margin-left: 6px; }
.u::after { content: ""; position: absolute; left: 4px; right: 4px; bottom: 0; height: 2px; background: #76b9ed; }
.t-g { width: 48px; }
.t.act { width: 47px; background: #323c42; margin-left: 2px; }
.t.act::after, .t-n::after { left: 0; right: 0; }
.t.t-n { width: 40px; margin-left: 5px; }
.tray { display: flex; align-items: center; height: 40px; flex: 1; min-width: 0; }
.cpu { display: flex; flex-direction: column; align-items: center; width: 50px; margin-left: 59px; line-height: 20px; flex: none; }
.tr { flex: none; }
.tr1 { margin-left: 18px; }
.tr2 { margin-left: 8px; }
.tr3 { margin-left: 9px; }
.tr4 { margin-left: 5px; }
.tr5 { margin-left: 7px; }
.zh { margin-left: 8px; font-size: 14px; flex: none; }
.tr6 { margin-left: 14px; }
.clock { display: flex; flex-direction: column; align-items: flex-end; margin-left: 9px; line-height: 18px; font-size: 12px; width: 70px; flex: none; }
.notif { position: relative; margin-left: 17px; display: block; width: 30px; height: 30px; padding-top: 2px; flex: none; }
.nbadge { position: absolute; left: 8px; top: 13px; width: 17px; height: 17px; border-radius: 50%; background: #2a2a2a; border: 1px solid #aaa; text-align: center; line-height: 15px; font-size: 11px; }

.badge74 { position: absolute; left: 885px; top: -30px; width: 48px; height: 49px; border-radius: 50%; background: linear-gradient(#5ed35e, #2eaa45); border: 2px solid #e8e8e8; box-shadow: 0 1px 3px #666; color: #fff; font-weight: bold; font-size: 11px; text-align: center; padding-top: 29px; }
.ime { position: absolute; left: 990px; top: 3px; width: 183px; height: 24px; display: flex; align-items: center; gap: 9px; }
.ime::before { content: ""; position: absolute; left: 22px; top: 0; right: 0; bottom: 0; background: #fff; border: 1px solid #b9cfe4; }
.ime > * { position: relative; flex: none; }
.imes { margin: -3px -3px 0 0; }
.imet { color: #1d70b8; font-weight: bold; font-size: 14px; }
.im-k { margin-left: -2px; }
.im-s { margin-left: -5px; }
.im-w { margin-left: -3px; }
```
